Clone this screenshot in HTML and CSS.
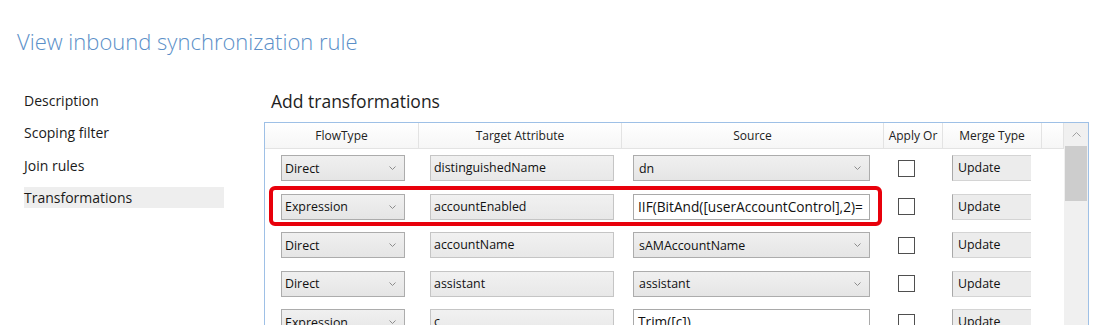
FILE: index.html
```html
<!DOCTYPE html>
<html lang="en">
<head>
    <meta charset="UTF-8">
    <title>View inbound synchronization rule</title>
    <link rel="stylesheet" href="styles.css">
</head>
<body>
    <div class="page">
        <h1 class="title">View inbound synchronization rule</h1>
        <div class="content">
            <ul class="nav">
                <li>Description</li>
                <li>Scoping filter</li>
                <li>Join rules</li>
                <li class="active">Transformations</li>
            </ul>
            <div class="main">
                <h2>Add transformations</h2>
                <div class="grid-box">
                    <div class="grid">
                        <div class="row head">
                            <div class="cell c1">FlowType</div>
                            <div class="cell c2">Target Attribute</div>
                            <div class="cell c3">Source</div>
                            <div class="cell c4">Apply Or</div>
                            <div class="cell c5">Merge Type</div>
                            <div class="cell c6"></div>
                        </div>
                        <div class="row">
                            <div class="cell c1"><div class="select">Direct<svg width="7" height="4" viewBox="0 0 7 4"><polyline points="0.5,0.5 3.5,3.5 6.5,0.5"/></svg></div></div>
                            <div class="cell c2"><div class="field">distinguishedName</div></div>
                            <div class="cell c3"><div class="select">dn<svg width="7" height="4" viewBox="0 0 7 4"><polyline points="0.5,0.5 3.5,3.5 6.5,0.5"/></svg></div></div>
                            <div class="cell c4"><div class="check"></div></div>
                            <div class="cell c5"><div class="merge">Update</div></div>
                            <div class="cell c6"></div>
                        </div>
                        <div class="row">
                            <div class="cell c1"><div class="select">Expression<svg width="7" height="4" viewBox="0 0 7 4"><polyline points="0.5,0.5 3.5,3.5 6.5,0.5"/></svg></div></div>
                            <div class="cell c2"><div class="field">accountEnabled</div></div>
                            <div class="cell c3"><div class="text">IIF(BitAnd([userAccountControl],2)=</div></div>
                            <div class="cell c4"><div class="check"></div></div>
                            <div class="cell c5"><div class="merge">Update</div></div>
                            <div class="cell c6"></div>
                        </div>
                        <div class="row">
                            <div class="cell c1"><div class="select">Direct<svg width="7" height="4" viewBox="0 0 7 4"><polyline points="0.5,0.5 3.5,3.5 6.5,0.5"/></svg></div></div>
                            <div class="cell c2"><div class="field">accountName</div></div>
                            <div class="cell c3"><div class="select">sAMAccountName<svg width="7" height="4" viewBox="0 0 7 4"><polyline points="0.5,0.5 3.5,3.5 6.5,0.5"/></svg></div></div>
                            <div class="cell c4"><div class="check"></div></div>
                            <div class="cell c5"><div class="merge">Update</div></div>
                            <div class="cell c6"></div>
                        </div>
                        <div class="row">
                            <div class="cell c1"><div class="select">Direct<svg width="7" height="4" viewBox="0 0 7 4"><polyline points="0.5,0.5 3.5,3.5 6.5,0.5"/></svg></div></div>
                            <div class="cell c2"><div class="field">assistant</div></div>
                            <div class="cell c3"><div class="select">assistant<svg width="7" height="4" viewBox="0 0 7 4"><polyline points="0.5,0.5 3.5,3.5 6.5,0.5"/></svg></div></div>
                            <div class="cell c4"><div class="check"></div></div>
                            <div class="cell c5"><div class="merge">Update</div></div>
                            <div class="cell c6"></div>
                        </div>
                        <div class="row">
                            <div class="cell c1"><div class="select">Expression<svg width="7" height="4" viewBox="0 0 7 4"><polyline points="0.5,0.5 3.5,3.5 6.5,0.5"/></svg></div></div>
                            <div class="cell c2"><div class="field">c</div></div>
                            <div class="cell c3"><div class="text">Trim([c])</div></div>
                            <div class="cell c4"><div class="check"></div></div>
                            <div class="cell c5"><div class="merge">Update</div></div>
                            <div class="cell c6"></div>
                        </div>
                    </div>
                    <div class="scrollbar">
                        <div class="arrow"><svg width="9" height="5" viewBox="0 0 9 5"><polyline points="0.5,4.5 4.5,0.5 8.5,4.5"/></svg></div>
                        <div class="thumb"></div>
                    </div>
                    <div class="highlight"></div>
                </div>
            </div>
        </div>
    </div>
</body>
</html>
```

FILE: styles.css
```css
body {
    margin: 0;
    font-family: "Open Sans", "Noto Sans", sans-serif;
    color: #1a1a1a;
    background: #fff;
    overflow: hidden;
}

.page {
    padding-left: 17px;
}

.title {
    margin: 0;
    padding-top: 26px;
    font-size: 22px;
    line-height: 30px;
    font-weight: 300;
    color: #5b8fc8;
}

.content {
    display: flex;
    margin-top: 25px;
}

.nav {
    list-style: none;
    margin: 0;
    padding: 9px 0 0 7px;
    width: 240px;
}

.nav li {
    width: 200px;
    height: 21px;
    line-height: 21px;
    font-size: 14px;
    margin-bottom: 11.3px;
}

.nav li.active {
    background-color: #eeeeee;
}

.main {
    flex: 1;
}

.main h2 {
    margin: 9px 0 10px 7px;
    font-size: 17.5px;
    font-weight: 400;
    line-height: 22px;
    color: #1e1e1e;
}

.grid-box {
    position: relative;
    display: flex;
    width: 823px;
    height: 260px;
    border: 1px solid #9ec0e6;
    border-bottom: none;
}

.grid {
    width: 799px;
    font-size: 12.4px;
}

.row {
    display: flex;
    height: 38.5px;
    align-items: center;
}

.row.head {
    height: 26px;
    font-size: 12px;
    background: linear-gradient(#ffffff, #f6f6f6);
    border-bottom: 1px solid #e3e3e3;
    box-sizing: border-box;
}

.head .cell {
    height: 100%;
    display: flex;
    align-items: center;
    justify-content: center;
    border-right: 1px solid #e3e3e3;
    box-sizing: border-box;
    color: #222;
}

.cell {
    overflow: hidden;
    white-space: nowrap;
}

.c1 { width: 154px; padding-left: 16px; box-sizing: border-box; }
.c2 { width: 203px; padding-left: 11px; box-sizing: border-box; }
.c3 { width: 262px; padding-left: 11px; box-sizing: border-box; }
.c4 { width: 59px; padding-left: 14px; box-sizing: border-box; }
.c5 { width: 99px; padding-left: 9px; box-sizing: border-box; }
.c6 { width: 22px; }

.head .c1,
.head .c2,
.head .c3,
.head .c4,
.head .c5 {
    padding-left: 0;
}

.select {
    display: flex;
    align-items: center;
    justify-content: space-between;
    box-sizing: border-box;
    height: 26px;
    border: 1px solid #acacac;
    background: linear-gradient(#f0f0f0, #e5e5e5);
    padding: 0 8px 0 3px;
    color: #111;
}

.c1 .select { width: 124px; }
.c3 .select { width: 237px; padding-left: 5px; }

.select svg polyline {
    fill: none;
    stroke: #8c8c8c;
    stroke-width: 1;
}

.field {
    box-sizing: border-box;
    width: 184px;
    height: 26px;
    line-height: 24px;
    border: 1px solid #c5c5c5;
    background: linear-gradient(#f1f1f1, #e8e8e8);
    padding-left: 3px;
    color: #111;
}

.text {
    box-sizing: border-box;
    width: 237px;
    height: 26px;
    line-height: 24px;
    font-size: 13.7px;
    border: 1px solid #a9a9a9;
    background: #fff;
    padding-left: 4px;
    overflow: hidden;
    color: #111;
}

.check {
    width: 17px;
    height: 17px;
    box-sizing: border-box;
    border: 1px solid #4f4f4f;
    background: #fff;
}

.merge {
    box-sizing: border-box;
    width: 79px;
    height: 26px;
    line-height: 24px;
    border: 1px solid #d4d4d4;
    border-left-color: #a8a8a8;
    border-right: none;
    background: #ececec;
    padding-left: 5px;
    color: #111;
}

.scrollbar {
    width: 24px;
    background: #f0f0f0;
}

.arrow {
    height: 23px;
    display: flex;
    align-items: center;
    justify-content: center;
}

.arrow svg polyline {
    fill: none;
    stroke: #a0a0a0;
    stroke-width: 1;
}

.thumb {
    height: 55px;
    margin: 0 1px 0 1px;
    background: #cdcdcd;
}

.highlight {
    position: absolute;
    left: 4px;
    top: 63px;
    width: 613px;
    height: 40px;
    box-sizing: border-box;
    border: 4px solid #e8000b;
    border-radius: 6px;
}
```
